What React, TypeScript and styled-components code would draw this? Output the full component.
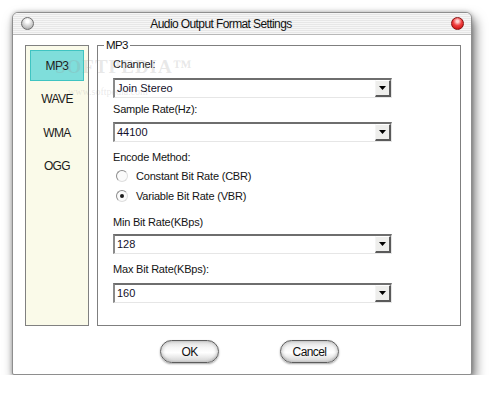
import styled, { createGlobalStyle, css } from 'styled-components';

const GlobalStyle = createGlobalStyle`
  body {
    margin: 0;
    background: #ffffff;
    font-family: "Liberation Sans", Arial, sans-serif;
  }
`;

// the dialog uses a condensed face; squeeze Liberation Sans to match
const narrow = css`
  font-family: "Liberation Sans", Arial, sans-serif;
  letter-spacing: -0.6px;
`;

const Page = styled.div`
  padding: 12px 0 0 12px;
`;

const Window = styled.div`
  position: relative;
  width: 460px;
  height: 363px;
  box-sizing: border-box;
  border: 1px solid #8e8e8e;
  border-radius: 6px 6px 2px 2px;
  background: #ffffff;
  box-shadow: 3px 6px 12px rgba(0, 0, 0, 0.55), 0 0 4px rgba(0, 0, 0, 0.25);
  display: flex;
  flex-direction: column;
`;

const TitleBar = styled.div`
  height: 21px;
  display: flex;
  align-items: center;
  padding: 0 7px 0 8px;
  border-bottom: 1px solid #b8b8b8;
  border-radius: 5px 5px 0 0;
  background: repeating-linear-gradient(to bottom, #f6f6f6 0 1px, #e7e7e7 1px 2px);
`;

const Light = styled.span<{ $red?: boolean }>`
  width: 13px;
  height: 13px;
  box-sizing: border-box;
  border-radius: 50%;
  flex: none;
  border: 1px solid ${(p) => (p.$red ? '#8a1010' : '#6e6e6e')};
  background: ${(p) =>
    p.$red
      ? 'radial-gradient(circle at 50% 30%, #ffd0d0 0 12%, #f04040 45%, #c00000 100%)'
      : 'radial-gradient(circle at 50% 30%, #ffffff 0 15%, #d4d4d4 50%, #9a9a9a 100%)'};
`;

const Title = styled.div`
  flex: 1;
  text-align: center;
  padding-right: 43px;
  font-size: 12px;
  color: #111111;
  ${narrow}
`;

const Body = styled.div`
  display: flex;
  gap: 8px;
  padding: 10px 10px 0 12px;
`;

const SidePanel = styled.div`
  width: 64px;
  height: 281px;
  box-sizing: border-box;
  border: 1px solid #808080;
  background: #fafae9;
  padding: 4px;
  display: flex;
  flex-direction: column;
  gap: 2.5px;
`;

const SideItem = styled.div<{ $active?: boolean }>`
  width: 54px;
  height: 31px;
  box-sizing: border-box;
  display: flex;
  align-items: center;
  justify-content: center;
  font-size: 12px;
  color: #1a1a1a;
  border: 1px solid ${(p) => (p.$active ? '#3fc4c2' : 'transparent')};
  background: ${(p) => (p.$active ? '#7fdedb' : 'transparent')};
  ${narrow}
`;

const GroupBox = styled.div`
  position: relative;
  width: 364px;
  height: 281px;
  box-sizing: border-box;
  border: 1px solid #7f7f7f;
  padding: 0 0 0 15px;
  display: flex;
  flex-direction: column;
`;

const Legend = styled.span`
  position: absolute;
  top: -8px;
  left: 6px;
  padding: 0 2px;
  background: #ffffff;
  font-size: 11.5px;
  line-height: 14px;
  color: #111111;
  ${narrow}
`;

const Label = styled.div<{ $top: number }>`
  margin-top: ${(p) => p.$top}px;
  height: 14px;
  line-height: 14px;
  font-size: 11px;
  letter-spacing: -0.2px;
  color: #141414;
`;

const Select = styled.div<{ $top: number }>`
  margin-top: ${(p) => p.$top}px;
  width: 279px;
  height: 20px;
  box-sizing: border-box;
  display: flex;
  border-style: solid;
  border-width: 2px 1px 1px 2px;
  border-color: #6e6e6e #e6e6e6 #e6e6e6 #8a8a8a;
  background: #ffffff;
`;

const SelectValue = styled.span`
  flex: 1;
  padding-left: 2px;
  font-size: 11px;
  line-height: 17px;
  color: #14102a;
`;

const ArrowButton = styled.span`
  width: 16px;
  height: 17px;
  box-sizing: border-box;
  display: flex;
  align-items: center;
  justify-content: center;
  background: #eeeeec;
  border-style: solid;
  border-width: 1px 2px 2px 1px;
  border-color: #ffffff #5a5a5a #5a5a5a #f4f4f4;
`;

const RadioRow = styled.label<{ $top: number }>`
  margin-top: ${(p) => p.$top}px;
  height: 14px;
  display: flex;
  align-items: center;
  gap: 8px;
  padding-left: 3px;
  font-size: 11px;
  letter-spacing: -0.2px;
  color: #141414;
`;

const Radio = styled.span<{ $checked?: boolean }>`
  width: 12px;
  height: 12px;
  box-sizing: border-box;
  border-radius: 50%;
  border: 1px solid;
  border-color: #8c8c8c #dedede #dedede #8c8c8c;
  background: #fbfbfb;
  display: flex;
  align-items: center;
  justify-content: center;

  &::after {
    content: '';
    width: 4px;
    height: 4px;
    border-radius: 50%;
    background: ${(p) => (p.$checked ? '#1c1c1c' : 'transparent')};
  }
`;

const ButtonRow = styled.div`
  display: flex;
  gap: 61px;
  margin-top: 14px;
  padding-left: 147px;
`;

const PillButton = styled.button`
  width: 59px;
  height: 23px;
  box-sizing: border-box;
  border: 1px solid #5c5c5c;
  border-radius: 12px;
  padding: 0;
  background: linear-gradient(to bottom, #dcdcdc 0%, #f6f6f6 30%, #ffffff 55%, #e2e2e2 85%, #f0f0f0 100%);
  box-shadow: 0 1px 2px rgba(0, 0, 0, 0.35), inset 0 -2px 2px rgba(0, 0, 0, 0.08), inset 2px 0 3px rgba(0, 0, 0, 0.12),
    inset -2px 0 3px rgba(0, 0, 0, 0.12);
  font-size: 12px;
  color: #111111;
  ${narrow}
`;

const Watermark = styled.div`
  position: absolute;
  left: 42px;
  top: 44px;
  pointer-events: none;
  color: rgba(150, 150, 150, 0.22);
  font-family: "Liberation Serif", serif;
  font-weight: bold;
  font-size: 19px;
  letter-spacing: 1px;
  line-height: 20px;

  small {
    display: block;
    margin: 10px 0 0 13px;
    font-family: "Liberation Serif", serif;
    font-weight: normal;
    font-size: 10px;
    letter-spacing: 0;
    line-height: 10px;
  }
`;

const DropArrow = () => (
  <svg width='7' height='4' viewBox='0 0 7 4'>
    <path d='M0 0h7L3.5 4z' fill='#000' />
  </svg>
);

interface TSelectProps {
  value: string;
  top: number;
}

const Dropdown = ({ value, top }: TSelectProps) => (
  <Select $top={top}>
    <SelectValue>{value}</SelectValue>
    <ArrowButton>
      <DropArrow />
    </ArrowButton>
  </Select>
);

const formats = ['MP3', 'WAVE', 'WMA', 'OGG'];

export default function App() {
  return (
    <Page>
      <GlobalStyle />
      <Window>
        <TitleBar>
          <Light />
          <Title>Audio Output Format Settings</Title>
          <Light $red />
        </TitleBar>
        <Body>
          <SidePanel>
            {formats.map((f) => (
              <SideItem key={f} $active={f === 'MP3'}>
                {f}
              </SideItem>
            ))}
          </SidePanel>
          <GroupBox>
            <Legend>MP3</Legend>
            <Label $top={11}>Channel:</Label>
            <Dropdown top={7} value='Join Stereo' />
            <Label $top={4}>Sample Rate(Hz):</Label>
            <Dropdown top={6} value='44100' />
            <Label $top={8}>Encode Method:</Label>
            <RadioRow $top={5}>
              <Radio />
              Constant Bit Rate (CBR)
            </RadioRow>
            <RadioRow $top={6}>
              <Radio $checked />
              Variable Bit Rate (VBR)
            </RadioRow>
            <Label $top={12}>Min Bit Rate(KBps)</Label>
            <Dropdown top={5} value='128' />
            <Label $top={8}>Max Bit Rate(KBps):</Label>
            <Dropdown top={7} value='160' />
          </GroupBox>
        </Body>
        <ButtonRow>
          <PillButton>OK</PillButton>
          <PillButton>Cancel</PillButton>
        </ButtonRow>
        <Watermark>
          SOFTPEDIA™
          <small>www.softpedia.com</small>
        </Watermark>
      </Window>
    </Page>
  );
}
